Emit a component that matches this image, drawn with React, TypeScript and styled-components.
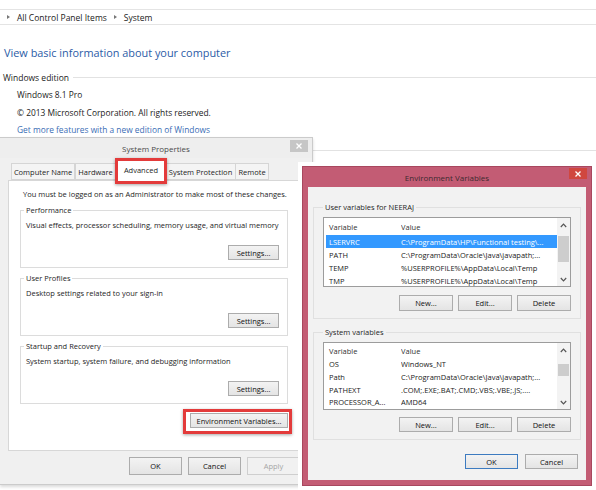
import styled, { createGlobalStyle, css } from "styled-components";

const GlobalStyle = createGlobalStyle`
  html, body {
    margin: 0;
    padding: 0;
    background: #fff;
  }
  body {
    font-family: "Open Sans", "Noto Sans", sans-serif;
    color: #1e1e1e;
  }
  * {
    box-sizing: border-box;
  }
`

const Screen = styled.div`
  position: relative;
  width: 596px;
  height: 490px;
  overflow: hidden;
  background: #fff;
`

/* ---------- control panel behind the dialogs ---------- */

const TopGap = styled.div`
  height: 10px;
  border-bottom: 1px solid #e4e4e4;
`

const Breadcrumb = styled.nav`
  height: 15px;
  border-bottom: 1px solid #e4e4e4;
  display: flex;
  align-items: center;
  gap: 7px;
  padding-left: 7px;
  font-size: 8.5px;
  color: #222;
`

const Crumb = styled.span`
  display: flex;
  align-items: center;
  gap: 7px;
  &::before {
    content: "";
    border-left: 3px solid #777;
    border-top: 2.5px solid transparent;
    border-bottom: 2.5px solid transparent;
  }
`

const Heading = styled.h1`
  margin: 20px 0 0 4px;
  font-size: 10.9px;
  line-height: 16px;
  font-weight: 400;
  color: #2b5ba6;
`

const SectionHead = styled.div<{ $mt: number }>`
  display: flex;
  align-items: center;
  height: 12px;
  margin-top: ${p => p.$mt}px;
  padding-left: 3px;
  font-size: 8.5px;
  color: #222;
  &::after {
    content: "";
    flex: 1;
    height: 1px;
    margin-left: 4px;
    background: #e2e2e2;
  }
`

const InfoList = styled.div`
  padding: 3px 0 0 17px;
  font-size: 8.4px;
  line-height: 17.5px;
  color: #222;
`

const Link = styled.div`
  color: #3a6db5;
`

/* ---------- shared window parts ---------- */

const highlight = css`
  &::after {
    content: "";
    position: absolute;
    border: 3px solid #e33b3b;
    box-shadow: 0 1px 3px rgba(0, 0, 0, 0.35);
    pointer-events: none;
  }
`

const TitleBar = styled.header<{ $active?: boolean }>`
  position: relative;
  flex: none;
  height: 20px;
  display: flex;
  align-items: center;
  justify-content: center;
  font-size: 8px;
  color: ${p => (p.$active ? "#3d2a30" : "#4a4a4a")};
`

const CloseBtn = styled.span<{ $active?: boolean }>`
  position: absolute;
  top: ${p => (p.$active ? 1 : 2)}px;
  right: 4px;
  width: 18px;
  height: ${p => (p.$active ? 11 : 12)}px;
  display: flex;
  align-items: center;
  justify-content: center;
  background: ${p => (p.$active ? "#d0473f" : "#c6c6c6")};
`

const Button = styled.button<{ $w: number; $h: number; $default?: boolean }>`
  position: relative;
  flex: none;
  width: ${p => p.$w}px;
  height: ${p => p.$h}px;
  padding: 0;
  font-family: inherit;
  font-size: 7.5px;
  color: #111;
  background: linear-gradient(#f3f3f3, #e4e4e4);
  border: 1px solid ${p => (p.$default ? "#3d7bc0" : "#acacac")};
  &:disabled {
    color: #a6a6a6;
    border-color: #cfcfcf;
    background: #f1f1f1;
  }
`

const Group = styled.fieldset<{ $mt: number; $pad: string; $border: string }>`
  margin: ${p => p.$mt}px 0 0 0;
  width: 268px;
  min-width: 0;
  padding: ${p => p.$pad};
  border: 1px solid ${p => p.$border};
  display: flex;
  flex-direction: column;
  legend {
    padding: 0 2px;
    font-size: 7.5px;
    line-height: 12px;
    color: #1e1e1e;
  }
`

const Text = styled.div<{ $mt?: number; $ml?: number }>`
  margin: ${p => p.$mt ?? 0}px 0 0 ${p => p.$ml ?? 0}px;
  font-size: 7.5px;
  line-height: 12px;
  white-space: nowrap;
`

const ButtonRow = styled.div<{ $mt: number; $gap: number; $pr?: number }>`
  display: flex;
  justify-content: flex-end;
  gap: ${p => p.$gap}px;
  margin-top: ${p => p.$mt}px;
  padding-right: ${p => p.$pr ?? 0}px;
`

/* ---------- System Properties ---------- */

const SysWindow = styled.section`
  position: absolute;
  left: 0;
  top: 137px;
  width: 313px;
  height: 348px;
  background: #eeeeee;
  border: 1px solid #cbcbcb;
  border-left: none;
  box-shadow: 0 2px 3px rgba(0, 0, 0, 0.15);
  display: flex;
  flex-direction: column;
`

const SysClient = styled.div`
  flex: 1;
  padding: 2px 0 0 8px;
  background: #f0f0f0;
`

const TabStrip = styled.div`
  position: relative;
  z-index: 1;
  display: flex;
  align-items: flex-end;
  height: 20px;
  padding-left: 3px;
`

const Tab = styled.div<{ $w: number; $ml: number; $selected?: boolean }>`
  position: relative;
  width: ${p => p.$w}px;
  height: ${p => (p.$selected ? 21 : 17)}px;
  margin-left: ${p => p.$ml}px;
  margin-bottom: ${p => (p.$selected ? -1 : 0)}px;
  z-index: ${p => (p.$selected ? 2 : 0)};
  display: flex;
  align-items: center;
  justify-content: center;
  padding-bottom: ${p => (p.$selected ? 3 : 0)}px;
  font-size: 7.5px;
  white-space: nowrap;
  background: ${p => (p.$selected ? "#fff" : "#f4f4f4")};
  border: 1px solid #d5d5d5;
  border-bottom: ${p => (p.$selected ? "none" : "1px solid #d5d5d5")};
  ${p =>
    p.$selected &&
    css`
      ${highlight}
      &::after {
        top: -3px;
        left: -1px;
        right: -1px;
        bottom: -3px;
      }
    `}
`

const TabPanel = styled.div`
  width: 300px;
  height: 271px;
  padding: 7px 0 0 11px;
  background: #fff;
  border: 1px solid #d7d7d7;
  display: flex;
  flex-direction: column;
`

const EnvButtonWrap = styled.div`
  width: 268px;
  display: flex;
  justify-content: flex-end;
  margin-top: 9px;
  button {
    ${highlight}
    &::after {
      top: -5px;
      left: -8px;
      right: -5px;
      bottom: -7px;
    }
  }
`

/* ---------- Environment Variables ---------- */

const EnvWindow = styled.section`
  position: absolute;
  left: 302px;
  top: 166px;
  width: 290px;
  height: 320px;
  background: #c35c74;
  border: 1px solid #a8475e;
  box-shadow: 0 0 0 4px #fff;
  display: flex;
  flex-direction: column;
`

const EnvClient = styled.div`
  flex: 1;
  margin: 0 5px 5px;
  padding: 14px 0 0 5px;
  background: #f2f2f2;
  display: flex;
  flex-direction: column;
`

const ListBox = styled.div<{ $h: number }>`
  display: flex;
  height: ${p => p.$h}px;
  margin-top: 4px;
  background: #fff;
  border: 1px solid #9c9c9c;
  overflow: hidden;
`

const ListBody = styled.div`
  flex: 1;
  min-width: 0;
  padding-left: 2px;
  display: flex;
  flex-direction: column;
`

const ListRow = styled.div<{ $h: number; $header?: boolean; $selected?: boolean }>`
  flex: none;
  display: flex;
  align-items: center;
  height: ${p => p.$h}px;
  font-size: 7.5px;
  white-space: nowrap;
  color: ${p => (p.$selected ? "#fff" : p.$header ? "#333" : "#1a1a1a")};
  background: ${p => (p.$selected ? "#3399ff" : "transparent")};
`

const NameCell = styled.span`
  flex: none;
  width: 75px;
  padding-left: 3px;
  overflow: hidden;
`

const ValueCell = styled.span`
  flex: 1;
  min-width: 0;
  overflow: hidden;
`

const ScrollBar = styled.div`
  flex: none;
  width: 13px;
  background: #f3f3f3;
  display: flex;
  flex-direction: column;
`

const ScrollArrow = styled.div`
  flex: none;
  height: 14px;
  display: flex;
  align-items: center;
  justify-content: center;
`

const Track = styled.div`
  flex: 1;
  display: flex;
  flex-direction: column;
`

const Thumb = styled.div<{ $top: number; $h: number }>`
  margin: ${p => p.$top}px 1px 0;
  height: ${p => p.$h}px;
  background: #cdcdcd;
`

const CloseIcon = () => (
  <svg width="6" height="6" viewBox="0 0 6 6">
    <path d="M0.5 0.5 L5.5 5.5 M5.5 0.5 L0.5 5.5" stroke="#fff" strokeWidth="1.3" />
  </svg>
)

const Chevron = ({ up }: { up?: boolean }) => (
  <svg width="7" height="5" viewBox="0 0 7 5">
    <polyline
      points={up ? "0.8,4 3.5,1.2 6.2,4" : "0.8,1 3.5,3.8 6.2,1"}
      fill="none"
      stroke="#555"
      strokeWidth="1.2"
    />
  </svg>
)

type Variable = { name: string; value: string; selected?: boolean }

const userVars: Variable[] = [
  { name: "LSERVRC", value: "C:\\ProgramData\\HP\\Functional testing\\...", selected: true },
  { name: "PATH", value: "C:\\ProgramData\\Oracle\\Java\\javapath;..." },
  { name: "TEMP", value: "%USERPROFILE%\\AppData\\Local\\Temp" },
  { name: "TMP", value: "%USERPROFILE%\\AppData\\Local\\Temp" },
]

const systemVars: Variable[] = [
  { name: "OS", value: "Windows_NT" },
  { name: "Path", value: "C:\\ProgramData\\Oracle\\Java\\javapath;..." },
  { name: "PATHEXT", value: ".COM;.EXE;.BAT;.CMD;.VBS;.VBE;.JS;...." },
  { name: "PROCESSOR_A...", value: "AMD64" },
]

function VariableList({ items, height, headerH, rowH, thumbTop, thumbHeight }: {
  items: Variable[]
  height: number
  headerH: number
  rowH: number
  thumbTop: number
  thumbHeight: number
}) {
  return (
    <ListBox $h={height}>
      <ListBody>
        <ListRow $h={headerH} $header>
          <NameCell>Variable</NameCell>
          <ValueCell>Value</ValueCell>
        </ListRow>
        {items.map(v => (
          <ListRow key={v.name} $h={rowH} $selected={v.selected}>
            <NameCell>{v.name}</NameCell>
            <ValueCell>{v.value}</ValueCell>
          </ListRow>
        ))}
      </ListBody>
      <ScrollBar>
        <ScrollArrow><Chevron up /></ScrollArrow>
        <Track>
          <Thumb $top={thumbTop} $h={thumbHeight} />
        </Track>
        <ScrollArrow><Chevron /></ScrollArrow>
      </ScrollBar>
    </ListBox>
  )
}

const tabs = [
  { label: "Computer Name", w: 64, ml: 0 },
  { label: "Hardware", w: 41, ml: 0 },
  { label: "Advanced", w: 52, ml: -1, selected: true },
  { label: "System Protection", w: 71, ml: -2 },
  { label: "Remote", w: 34, ml: -1 },
]

const settingsGroups = [
  { title: "Performance", desc: "Visual effects, processor scheduling, memory usage, and virtual memory" },
  { title: "User Profiles", desc: "Desktop settings related to your sign-in" },
  { title: "Startup and Recovery", desc: "System startup, system failure, and debugging information" },
]

export default function App() {
  return (
    <Screen>
      <GlobalStyle />

      <TopGap />
      <Breadcrumb>
        <Crumb>All Control Panel Items</Crumb>
        <Crumb>System</Crumb>
      </Breadcrumb>
      <Heading>View basic information about your computer</Heading>
      <SectionHead $mt={10}>Windows edition</SectionHead>
      <InfoList>
        <div>Windows 8.1 Pro</div>
        <div>© 2013 Microsoft Corporation. All rights reserved.</div>
        <Link>Get more features with a new edition of Windows</Link>
      </InfoList>
      <SectionHead $mt={6}>System</SectionHead>
      <SectionHead $mt={74}>Computer name, domain, and workgroup settings</SectionHead>
      <SectionHead $mt={79}>Windows activation</SectionHead>

      <SysWindow>
        <TitleBar>
          System Properties
          <CloseBtn><CloseIcon /></CloseBtn>
        </TitleBar>
        <SysClient>
          <TabStrip>
            {tabs.map(t => (
              <Tab key={t.label} $w={t.w} $ml={t.ml} $selected={t.selected}>
                {t.label}
              </Tab>
            ))}
          </TabStrip>
          <TabPanel>
            <Text $ml={3}>You must be logged on as an Administrator to make most of these changes.</Text>
            {settingsGroups.map(g => (
              <Group key={g.title} $mt={4} $pad="0 8px 7px 3px" $border="#dcdcdc">
                <legend>{g.title}</legend>
                <Text $mt={3} $ml={2}>{g.desc}</Text>
                <ButtonRow $mt={14} $gap={0}>
                  <Button $w={51} $h={15}>Settings...</Button>
                </ButtonRow>
              </Group>
            ))}
            <EnvButtonWrap>
              <Button $w={98} $h={15}>Environment Variables...</Button>
            </EnvButtonWrap>
          </TabPanel>
          <ButtonRow $mt={6} $gap={6} $pr={12}>
            <Button $w={53} $h={18}>OK</Button>
            <Button $w={53} $h={18}>Cancel</Button>
            <Button $w={53} $h={18} disabled>Apply</Button>
          </ButtonRow>
        </SysClient>
      </SysWindow>

      <EnvWindow>
        <TitleBar $active>
          Environment Variables
          <CloseBtn $active><CloseIcon /></CloseBtn>
        </TitleBar>
        <EnvClient>
          <Group $mt={0} $pad="0 9px 7px 9px" $border="#e0e0e0">
            <legend>User variables for NEERAJ</legend>
            <VariableList items={userVars} height={70} headerH={17} rowH={13} thumbTop={4} thumbHeight={26} />
            <ButtonRow $mt={8} $gap={5}>
              <Button $w={54} $h={16}>New...</Button>
              <Button $w={54} $h={16}>Edit...</Button>
              <Button $w={54} $h={16}>Delete</Button>
            </ButtonRow>
          </Group>
          <Group $mt={7} $pad="0 9px 7px 9px" $border="#e0e0e0">
            <legend>System variables</legend>
            <VariableList items={systemVars} height={68} headerH={15} rowH={12.7} thumbTop={7} thumbHeight={12} />
            <ButtonRow $mt={7} $gap={5}>
              <Button $w={54} $h={15}>New...</Button>
              <Button $w={54} $h={15}>Edit...</Button>
              <Button $w={54} $h={15}>Delete</Button>
            </ButtonRow>
          </Group>
          <ButtonRow $mt={14} $gap={7} $pr={8}>
            <Button $w={53} $h={15} $default>OK</Button>
            <Button $w={53} $h={15}>Cancel</Button>
          </ButtonRow>
        </EnvClient>
      </EnvWindow>
    </Screen>
  )
}
